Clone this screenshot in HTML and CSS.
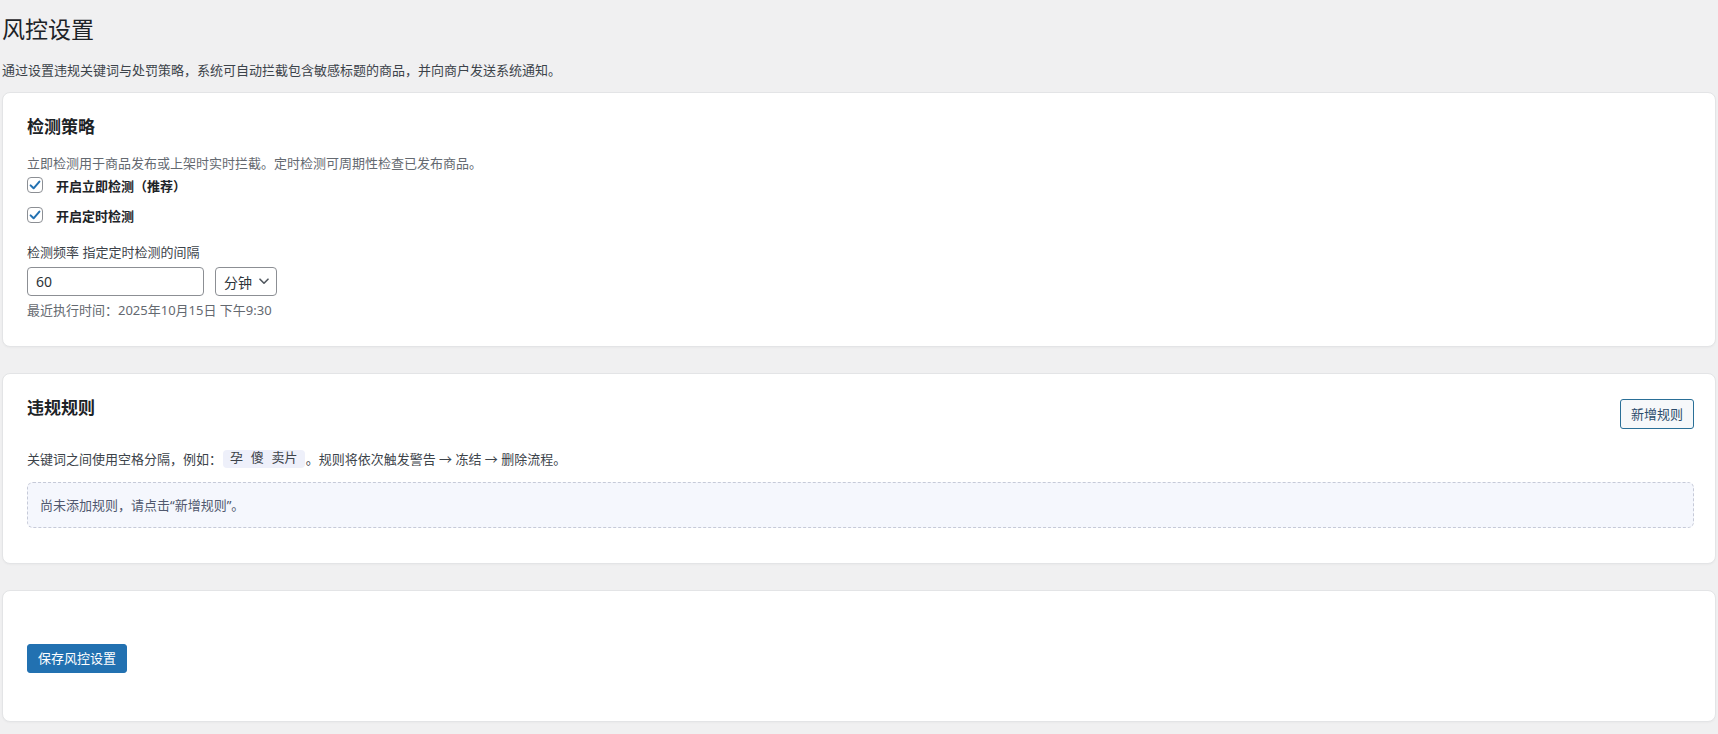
FILE: index.html
```html
<!DOCTYPE html>
<html lang="zh-CN">
<head>
<meta charset="utf-8">
<title>风控设置</title>
<link rel="stylesheet" href="styles.css">
</head>
<body>
<div class="wrap">
  <h1 class="page-title">风控设置</h1>
  <p class="page-desc">通过设置违规关键词与处罚策略，系统可自动拦截包含敏感标题的商品，并向商户发送系统通知。</p>

  <section class="card card-strategy">
    <h2 class="card-title">检测策略</h2>
    <p class="card-desc">立即检测用于商品发布或上架时实时拦截。定时检测可周期性检查已发布商品。</p>
    <div class="check-list">
      <label class="check-row">
        <span class="check-box"><svg width="16" height="16" viewBox="0 0 16 16"><path d="M3.6 8.4 L6.6 11.3 L12.4 4.6" fill="none" stroke="#2271b1" stroke-width="2" stroke-linecap="round" stroke-linejoin="round"/></svg></span>
        <span class="check-label">开启立即检测（推荐）</span>
      </label>
      <label class="check-row">
        <span class="check-box"><svg width="16" height="16" viewBox="0 0 16 16"><path d="M3.6 8.4 L6.6 11.3 L12.4 4.6" fill="none" stroke="#2271b1" stroke-width="2" stroke-linecap="round" stroke-linejoin="round"/></svg></span>
        <span class="check-label">开启定时检测</span>
      </label>
    </div>
    <div class="field">
      <div class="field-label">检测频率 指定定时检测的间隔</div>
      <div class="field-controls">
        <div class="text-input">60</div>
        <div class="select-input"><span>分钟</span><svg width="10" height="7" viewBox="0 0 10 7"><path d="M1 1.2 L5 5.2 L9 1.2" fill="none" stroke="#50575e" stroke-width="1.6" stroke-linecap="round" stroke-linejoin="round"/></svg></div>
      </div>
      <div class="field-note">最近执行时间：2025年10月15日 下午9:30</div>
    </div>
  </section>

  <section class="card card-rules">
    <div class="card-head">
      <h2 class="card-title">违规规则</h2>
      <button class="btn-secondary" type="button">新增规则</button>
    </div>
    <p class="rules-desc">关键词之间使用空格分隔，例如：<code class="kw">孕 傻 卖片</code>。规则将依次触发警告 → 冻结 → 删除流程。</p>
    <div class="empty-box">尚未添加规则，请点击“新增规则”。</div>
  </section>

  <section class="card card-save">
    <button class="btn-primary" type="button">保存风控设置</button>
  </section>
</div>
</body>
</html>
```

FILE: styles.css
```css
html, body {
  margin: 0;
  padding: 0;
  background: #f0f0f1;
}
body {
  font-family: "Noto Sans", "Noto Sans CJK SC", sans-serif;
  font-size: 13px;
  color: #3c434a;
}
.wrap {
  padding: 15px 2px 11px 2px;
}
.page-title {
  margin: 0;
  font-size: 23px;
  line-height: 29px;
  font-weight: 400;
  color: #1d2327;
}
.page-desc {
  margin: 16px 0 12px;
  line-height: 20px;
  color: #3c434a;
}
.card {
  background: #fff;
  border: 1px solid #e3e4e6;
  border-radius: 8px;
  box-shadow: 0 1px 2px rgba(0, 0, 0, 0.03);
  padding: 24px 21px 27px 24px;
  margin-bottom: 26px;
}
.card-title {
  margin: 0;
  font-size: 17px;
  line-height: 20px;
  font-weight: 700;
  color: #1d2327;
}
.card-strategy .card-title {
  margin-bottom: 16px;
}
.card-desc {
  margin: 0;
  line-height: 20px;
  color: #646970;
}
.check-list {
  display: flex;
  flex-direction: column;
  gap: 6px;
  margin-top: 1px;
}
.check-row {
  display: flex;
  align-items: center;
  height: 24px;
}
.check-box {
  width: 14px;
  height: 14px;
  border: 1px solid #8c8f94;
  border-radius: 4px;
  background: #fff;
  display: flex;
  align-items: center;
  justify-content: center;
  margin-top: -2px;
}
.check-box svg {
  flex: none;
}
.check-label {
  margin-left: 13px;
  font-weight: 700;
  color: #1d2327;
  line-height: 20px;
}
.field {
  margin-top: 14px;
}
.field-label {
  line-height: 20px;
  color: #3c434a;
}
.field-controls {
  display: flex;
  gap: 11px;
  margin-top: 5px;
}
.text-input {
  box-sizing: border-box;
  width: 177px;
  height: 29px;
  border: 1px solid #8c8f94;
  border-radius: 4px;
  padding: 0 8px;
  font-size: 14px;
  line-height: 27px;
  color: #2c3338;
}
.select-input {
  box-sizing: border-box;
  width: 62px;
  height: 29px;
  border: 1px solid #8c8f94;
  border-radius: 4px;
  padding: 0 7px 0 8px;
  display: flex;
  align-items: center;
  justify-content: space-between;
  font-size: 14px;
  color: #2c3338;
}
.field-note {
  margin-top: 5px;
  line-height: 18px;
  color: #646970;
}
.card-rules {
  padding-bottom: 35px;
}
.card-head {
  display: flex;
  justify-content: space-between;
  align-items: flex-start;
  margin-bottom: 20px;
}
.btn-secondary {
  box-sizing: border-box;
  height: 30px;
  padding: 0 10px;
  margin-top: 1px;
  border: 1px solid #2a6f97;
  border-radius: 3px;
  background: #f6f8fa;
  color: #2c4c6b;
  font-family: "Noto Sans", "Noto Sans CJK SC", sans-serif;
  font-size: 13px;
  line-height: 28px;
}
.rules-desc {
  margin: 0;
  line-height: 20px;
  color: #3c434a;
}
.kw {
  display: inline-block;
  font-family: "Liberation Mono", "Noto Sans CJK SC", monospace;
  font-size: 13px;
  line-height: 18px;
  padding: 0 7px;
  margin: 0 1px;
  background: #eef0fa;
  border-radius: 4px;
  color: #3c434a;
  vertical-align: top;
  margin-top: 1px;
}
.empty-box {
  margin-top: 13px;
  border: 1px dashed #c6cad8;
  border-radius: 6px;
  background: #f5f7fd;
  padding: 12px 12px;
  line-height: 20px;
  color: #50586e;
}
.card-save {
  padding: 53px 24px 48px 24px;
}
.btn-primary {
  box-sizing: border-box;
  height: 29px;
  padding: 0 10px;
  border: 1px solid #2271b1;
  border-radius: 3px;
  background: #2271b1;
  color: #fff;
  font-family: "Noto Sans", "Noto Sans CJK SC", sans-serif;
  font-size: 13px;
  line-height: 27px;
}
```
